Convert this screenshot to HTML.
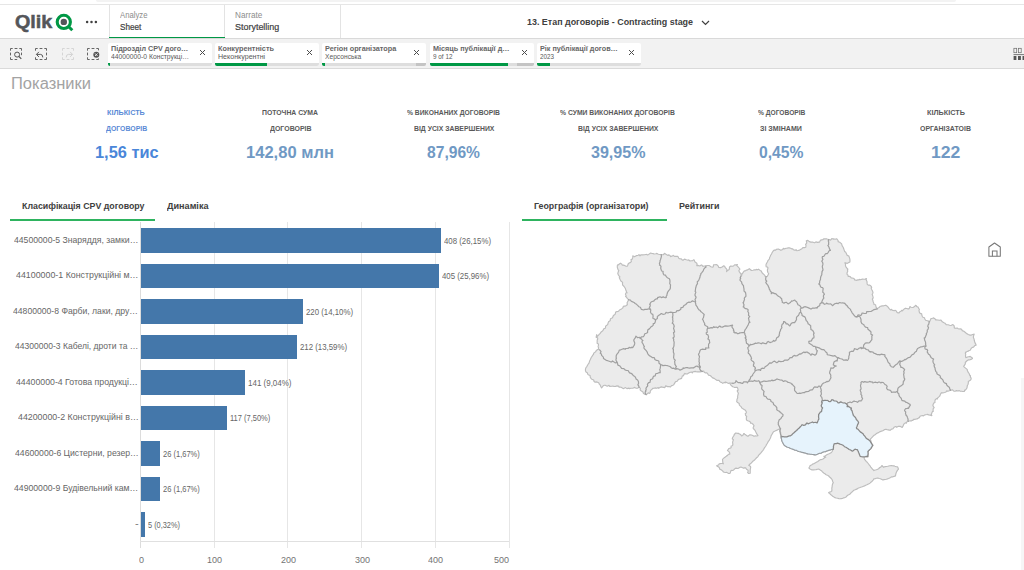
<!DOCTYPE html>
<html lang="uk">
<head>
<meta charset="utf-8">
<title>13. Етап договорів - Contracting stage</title>
<style>
*{box-sizing:border-box;margin:0;padding:0}
html,body{width:1024px;height:570px;overflow:hidden;background:#fff}
body{position:relative;font-family:"Liberation Sans","DejaVu Sans",sans-serif;color:#404040}
.abs{position:absolute}
.t{position:absolute;white-space:nowrap;line-height:1;transform-origin:0 50%}
#topline{left:0;top:4px;width:1024px;height:1px;background:#e6e6e6}
#topbar{left:96px;top:0;width:860px;height:2px;background:#f3f3f3;border-radius:0 0 3px 3px}
#hdr{left:0;top:5px;width:1024px;height:34px;background:#fff;border-bottom:1px solid #d9d9d9}
.vline{position:absolute;top:5px;width:1px;height:33px;background:#e3e3e3}
#tabul{left:109px;top:36.8px;width:115.5px;height:1.7px;background:#009845}
#selbar{left:0;top:39px;width:1024px;height:30px;background:#f2f2f2;border-bottom:1px solid #dadada}
.chip{position:absolute;top:43px;width:104px;height:23px;background:#fff;border-radius:2px;overflow:hidden}
.c1{font-size:8.1px;font-weight:bold;color:#666}
.c2{font-size:6.5px;color:#595959}
.chip .bar{position:absolute;left:0;bottom:0;height:3px;width:104px;background:#dedede}
.chip .bar i{position:absolute;left:0;top:0;height:100%;background:#009845;display:block}
.chip .bar b{position:absolute;right:0;top:0;height:100%;background:#c4c4c4;display:block}
.chip svg{position:absolute;left:90px;top:5.3px}
.klabel{font-weight:bold;font-size:7.5px;color:#767676}
.kval{font-weight:bold;font-size:16.5px;color:#7099c4}
.ptab{font-weight:bold;font-size:9.5px;color:#404040}
.ylab{font-size:9.2px;color:#666}
.vlab{font-size:8.7px;color:#666}
.xlab{font-size:8.7px;color:#737373}
.grid{position:absolute;top:222px;width:1px;height:326px;background:#e6e6e6}
.bar{position:absolute;left:141px;height:24.2px;background:#4477aa}
</style>
</head>
<body>
<div class="abs" id="topline"></div><div class="abs" id="topbar"></div>
<div class="abs" id="hdr"></div>
<div class="t " id="logo" style="left:14.90px;top:13.40px;transform:scaleX(1.0729);font-size:18.4px;font-weight:bold;color:#54565a;-webkit-text-stroke:0.5px #54565a">Qlik</div>
<svg class="abs" style="left:53px;top:11px" width="24" height="22" viewBox="0 0 24 22"><circle cx="10.8" cy="10.9" r="6.6" fill="none" stroke="#009845" stroke-width="3.1"/><circle cx="10.8" cy="10.9" r="3.2" fill="#54565a"/><path d="M15.2 15.3 L19.3 19.3" stroke="#009845" stroke-width="3" stroke-linecap="butt"/></svg>
<svg class="abs" style="left:85px;top:20px" width="14" height="4" viewBox="0 0 14 4"><circle cx="2.1" cy="2" r="1.25" fill="#404040"/><circle cx="6.5" cy="2" r="1.25" fill="#404040"/><circle cx="10.9" cy="2" r="1.25" fill="#404040"/></svg>
<div class="vline" style="left:109px"></div>
<div class="vline" style="left:224px"></div>
<div class="vline" style="left:340px"></div>
<div class="abs" id="tabul"></div>
<div class="t " id="nav1a" style="left:119.70px;top:11.20px;transform:scaleX(0.9312);font-size:8.3px;color:#8c8c8c">Analyze</div>
<div class="t " id="nav1b" style="left:119.70px;top:23.00px;transform:scaleX(0.9261);font-size:8.8px;color:#404040;-webkit-text-stroke:0.2px #404040">Sheet</div>
<div class="t " id="nav2a" style="left:234.70px;top:11.20px;transform:scaleX(0.9866);font-size:8.3px;color:#8c8c8c">Narrate</div>
<div class="t " id="nav2b" style="left:234.70px;top:23.00px;transform:scaleX(1.0177);font-size:8.8px;color:#404040;-webkit-text-stroke:0.2px #404040">Storytelling</div>
<div class="t " id="title" style="left:527.30px;top:17.90px;transform:scaleX(0.9585);font-size:9.3px;font-weight:bold;color:#404040">13. Етап договорів - Contracting stage</div>
<svg class="abs" style="left:701px;top:19.7px" width="9" height="6" viewBox="0 0 9 6"><path d="M1 1 L4.5 4.5 L8 1" fill="none" stroke="#404040" stroke-width="1.2"/></svg>
<div class="abs" id="selbar"></div>
<svg class="abs" style="left:8.5px;top:47px;opacity:1" width="14" height="14" viewBox="0 0 14 14"><rect x="1.5" y="1.5" width="11" height="11" fill="none" stroke="#555555" stroke-width="0.9" stroke-dasharray="4.4 1.9 2.8 1.9" stroke-dashoffset="2.2"/><rect x="8.5" y="8.5" width="6" height="6" fill="#f2f2f2"/><circle cx="8.1" cy="7.6" r="2.5" fill="#f2f2f2" stroke="#555555" stroke-width="1"/><path d="M10 9.5 L12.3 11.8" stroke="#555555" stroke-width="1.2"/></svg>
<svg class="abs" style="left:34.1px;top:47px;opacity:1" width="14" height="14" viewBox="0 0 14 14"><rect x="1.5" y="1.5" width="11" height="11" fill="none" stroke="#555555" stroke-width="0.9" stroke-dasharray="4.4 1.9 2.8 1.9" stroke-dashoffset="2.2"/><rect x="0" y="5" width="3" height="5" fill="#f2f2f2"/><path d="M2.6 7.4 H6.6 Q8.8 7.4 8.8 10.4" fill="none" stroke="#555555" stroke-width="1"/><path d="M4.9 4.9 L2.4 7.4 L4.9 9.9" fill="none" stroke="#555555" stroke-width="1"/></svg>
<svg class="abs" style="left:60.599999999999994px;top:47px;opacity:0.2" width="14" height="14" viewBox="0 0 14 14"><rect x="1.5" y="1.5" width="11" height="11" fill="none" stroke="#555555" stroke-width="0.9" stroke-dasharray="4.4 1.9 2.8 1.9" stroke-dashoffset="2.2"/><rect x="11" y="5" width="3" height="5" fill="#f2f2f2"/><path d="M11.4 7.4 H7.4 Q5.2 7.4 5.2 10.4" fill="none" stroke="#555555" stroke-width="1"/><path d="M9.1 4.9 L11.6 7.4 L9.1 9.9" fill="none" stroke="#555555" stroke-width="1"/></svg>
<svg class="abs" style="left:85.9px;top:47px;opacity:1" width="14" height="14" viewBox="0 0 14 14"><rect x="1.5" y="1.5" width="11" height="11" fill="none" stroke="#555555" stroke-width="0.9" stroke-dasharray="4.4 1.9 2.8 1.9" stroke-dashoffset="2.2"/><rect x="9" y="3.5" width="5" height="8" fill="#f2f2f2"/><circle cx="10.3" cy="7.7" r="3" fill="#555555"/><path d="M9 6.4 L11.6 9 M11.6 6.4 L9 9" stroke="#f2f2f2" stroke-width="0.9"/></svg>
<div class="chip" style="left:108px"><svg width="9" height="9" viewBox="0 0 9 9"><path d="M2 2 L7 7 M7 2 L2 7" stroke="#4d4d4d" stroke-width="1"/></svg><div class="bar"><i style="width:2px"></i></div></div>
<div class="t c1" id="ch0a" style="left:111.00px;top:44.80px;transform:scaleX(0.8879);">Підрозділ CPV дого…</div>
<div class="t c2" id="ch0b" style="left:111.00px;top:54.10px;transform:scaleX(1.0396);">44000000-0 Конструкці…</div>
<div class="chip" style="left:215px"><svg width="9" height="9" viewBox="0 0 9 9"><path d="M2 2 L7 7 M7 2 L2 7" stroke="#4d4d4d" stroke-width="1"/></svg><div class="bar"><i style="width:52px"></i></div></div>
<div class="t c1" id="ch1a" style="left:218.00px;top:44.80px;transform:scaleX(0.9016);">Конкурентність</div>
<div class="t c2" id="ch1b" style="left:218.00px;top:54.10px;transform:scaleX(1.0886);">Неконкурентні</div>
<div class="chip" style="left:322px"><svg width="9" height="9" viewBox="0 0 9 9"><path d="M2 2 L7 7 M7 2 L2 7" stroke="#4d4d4d" stroke-width="1"/></svg><div class="bar"><i style="width:3px"></i><b style="width:10px"></b></div></div>
<div class="t c1" id="ch2a" style="left:325.00px;top:44.80px;transform:scaleX(0.9016);">Регіон організатора</div>
<div class="t c2" id="ch2b" style="left:325.00px;top:54.10px;transform:scaleX(1.0242);">Херсонська</div>
<div class="chip" style="left:429.5px"><svg width="9" height="9" viewBox="0 0 9 9"><path d="M2 2 L7 7 M7 2 L2 7" stroke="#4d4d4d" stroke-width="1"/></svg><div class="bar"><i style="width:78.5px"></i><b style="width:17px"></b></div></div>
<div class="t c1" id="ch3a" style="left:432.50px;top:44.80px;transform:scaleX(0.8944);">Місяць публікації д…</div>
<div class="t c2" id="ch3b" style="left:432.50px;top:54.10px;transform:scaleX(0.9804);">9 of 12</div>
<div class="chip" style="left:537px"><svg width="9" height="9" viewBox="0 0 9 9"><path d="M2 2 L7 7 M7 2 L2 7" stroke="#4d4d4d" stroke-width="1"/></svg><div class="bar"><i style="width:13px"></i></div></div>
<div class="t c1" id="ch4a" style="left:540.00px;top:44.80px;transform:scaleX(0.8923);">Рік публікації догов…</div>
<div class="t c2" id="ch4b" style="left:540.00px;top:54.10px;transform:scaleX(0.9676);">2023</div>
<svg class="abs" style="left:1013px;top:47px" width="11" height="14" viewBox="0 0 11 14"><rect x="0.9" y="1.3" width="2.8" height="4.4" fill="none" stroke="#6a6a6a" stroke-width="0.7"/><rect x="5.4" y="1.3" width="2.8" height="4.4" fill="none" stroke="#6a6a6a" stroke-width="0.7"/><rect x="0.5" y="7.3" width="10.5" height="0.8" fill="#555"/><rect x="0.6" y="9" width="2.8" height="4" fill="#555"/><rect x="5" y="9" width="2.9" height="4" fill="#555"/><rect x="9.5" y="9" width="1.5" height="4" fill="#555"/></svg>
<div class="t " id="sheet" style="left:11.20px;top:75.90px;transform:scaleX(1.0320);font-size:16px;color:#a3a3a3">Показники</div>
<div class="t klabel" id="k0a" style="left:107.40px;top:109.00px;transform:scaleX(0.9646);color:#5a8ad6">КІЛЬКІСТЬ</div>
<div class="t klabel" id="k0b" style="left:105.90px;top:124.50px;transform:scaleX(0.9210);color:#5a8ad6">ДОГОВОРІВ</div>
<div class="t kval" id="k0v" style="left:94.80px;top:143.70px;transform:scaleX(0.9921);color:#4a86d9">1,56 тис</div>
<div class="t klabel" id="k1a" style="left:262.30px;top:109.00px;transform:scaleX(0.9136);color:#595959">ПОТОЧНА СУМА</div>
<div class="t klabel" id="k1b" style="left:269.50px;top:124.50px;transform:scaleX(0.9277);color:#595959">ДОГОВОРІВ</div>
<div class="t kval" id="k1v" style="left:246.30px;top:143.70px;transform:scaleX(1.0021);color:#7099c4">142,80 млн</div>
<div class="t klabel" id="k2a" style="left:407.30px;top:109.00px;transform:scaleX(0.8981);color:#595959">% ВИКОНАНИХ ДОГОВОРІВ</div>
<div class="t klabel" id="k2b" style="left:413.80px;top:124.50px;transform:scaleX(0.9128);color:#595959">ВІД УСІХ ЗАВЕРШЕНИХ</div>
<div class="t kval" id="k2v" style="left:427.30px;top:143.70px;transform:scaleX(0.9470);color:#7099c4">87,96%</div>
<div class="t klabel" id="k3a" style="left:560.30px;top:109.00px;transform:scaleX(0.9037);color:#595959">% СУМИ ВИКОНАНИХ ДОГОВОРІВ</div>
<div class="t klabel" id="k3b" style="left:577.80px;top:124.50px;transform:scaleX(0.9128);color:#595959">ВІД УСІХ ЗАВЕРШЕНИХ</div>
<div class="t kval" id="k3v" style="left:590.80px;top:143.70px;transform:scaleX(0.9738);color:#7099c4">39,95%</div>
<div class="t klabel" id="k4a" style="left:758.30px;top:109.00px;transform:scaleX(0.8862);color:#595959">% ДОГОВОРІВ</div>
<div class="t klabel" id="k4b" style="left:760.30px;top:124.50px;transform:scaleX(0.9442);color:#595959">ЗІ ЗМІНАМИ</div>
<div class="t kval" id="k4v" style="left:759.30px;top:143.70px;transform:scaleX(0.9509);color:#7099c4">0,45%</div>
<div class="t klabel" id="k5a" style="left:926.80px;top:109.00px;transform:scaleX(0.9671);color:#595959">КІЛЬКІСТЬ</div>
<div class="t klabel" id="k5b" style="left:920.30px;top:124.50px;transform:scaleX(0.9252);color:#595959">ОРГАНІЗАТОІВ</div>
<div class="t kval" id="k5v" style="left:930.80px;top:143.70px;transform:scaleX(1.0679);color:#7099c4">122</div>
<div class="t ptab" id="pt1" style="left:21.80px;top:200.90px;transform:scaleX(0.9279);">Класифікація CPV договору</div>
<div class="t ptab" id="pt2" style="left:166.80px;top:200.90px;transform:scaleX(0.9575);">Динаміка</div>
<div class="abs" style="left:10px;top:219.4px;width:144.7px;height:1.6px;background:#2eb35f"></div>
<div class="t ptab" id="pt3" style="left:534.30px;top:200.90px;transform:scaleX(0.9281);">Георграфія (організатори)</div>
<div class="t ptab" id="pt4" style="left:679.30px;top:200.90px;transform:scaleX(0.9361);">Рейтинги</div>
<div class="abs" style="left:522px;top:219.4px;width:145px;height:1.6px;background:#2eb35f"></div>
<div class="grid" style="left:139.9px;background:#dcdcdc"></div>
<div class="grid" style="left:213.7px"></div>
<div class="grid" style="left:287.4px"></div>
<div class="grid" style="left:361.1px"></div>
<div class="grid" style="left:434.9px"></div>
<div class="grid" style="left:508.6px"></div>
<div class="abs" style="left:140px;top:541.3px;width:369px;height:1.2px;background:#e0e0e0"></div>
<div class="bar" style="top:228.4px;width:300.3px"></div>
<div class="t ylab" id="yl0" style="left:13.90px;top:235.70px;transform:scaleX(0.9410);">44500000-5 Знаряддя, замки…</div>
<div class="t vlab" id="vl0" style="left:444.49px;top:236.50px;transform:scaleX(0.9009);">408 (26,15%)</div>
<div class="bar" style="top:263.9px;width:298.1px"></div>
<div class="t ylab" id="yl1" style="left:15.80px;top:271.20px;transform:scaleX(0.9625);">44100000-1 Конструкційні м…</div>
<div class="t vlab" id="vl1" style="left:442.28px;top:272.00px;transform:scaleX(0.9009);">405 (25,96%)</div>
<div class="bar" style="top:299.4px;width:161.9px"></div>
<div class="t ylab" id="yl2" style="left:13.30px;top:306.70px;transform:scaleX(0.9378);">44800000-8 Фарби, лаки, дру…</div>
<div class="t vlab" id="vl2" style="left:306.12px;top:307.50px;transform:scaleX(0.9009);">220 (14,10%)</div>
<div class="bar" style="top:334.9px;width:156.0px"></div>
<div class="t ylab" id="yl3" style="left:14.80px;top:342.20px;transform:scaleX(0.9295);">44300000-3 Кабелі, дроти та …</div>
<div class="t vlab" id="vl3" style="left:300.23px;top:343.00px;transform:scaleX(0.9009);">212 (13,59%)</div>
<div class="bar" style="top:370.4px;width:103.8px"></div>
<div class="t ylab" id="yl4" style="left:16.40px;top:377.70px;transform:scaleX(0.9517);">44400000-4 Готова продукці…</div>
<div class="t vlab" id="vl4" style="left:247.98px;top:378.50px;transform:scaleX(0.9191);">141 (9,04%)</div>
<div class="bar" style="top:405.9px;width:86.1px"></div>
<div class="t ylab" id="yl5" style="left:17.50px;top:413.20px;transform:scaleX(0.9600);">44200000-2 Конструкційні в…</div>
<div class="t vlab" id="vl5" style="left:230.31px;top:414.00px;transform:scaleX(0.8610);">117 (7,50%)</div>
<div class="bar" style="top:441.4px;width:19.1px"></div>
<div class="t ylab" id="yl6" style="left:14.50px;top:448.70px;transform:scaleX(0.9421);">44600000-6 Цистерни, резер…</div>
<div class="t vlab" id="vl6" style="left:163.34px;top:449.50px;transform:scaleX(0.8659);">26 (1,67%)</div>
<div class="bar" style="top:476.9px;width:19.1px"></div>
<div class="t ylab" id="yl7" style="left:14.00px;top:484.20px;transform:scaleX(0.9439);">44900000-9 Будівельний кам…</div>
<div class="t vlab" id="vl7" style="left:163.34px;top:485.00px;transform:scaleX(0.8659);">26 (1,67%)</div>
<div class="bar" style="top:512.4px;width:3.7px"></div>
<div class="t ylab" id="yl8" style="left:134.50px;top:519.70px;transform:scaleX(1.2082);">-</div>
<div class="t vlab" id="vl8" style="left:147.88px;top:520.50px;transform:scaleX(0.8494);">5 (0,32%)</div>
<div class="t xlab" id="xl0" style="left:138.50px;top:555.50px;transform:scaleX(1.0323);">0</div>
<div class="t xlab" id="xl1" style="left:207.20px;top:555.50px;transform:scaleX(1.0345);">100</div>
<div class="t xlab" id="xl2" style="left:280.90px;top:555.50px;transform:scaleX(1.0345);">200</div>
<div class="t xlab" id="xl3" style="left:354.70px;top:555.50px;transform:scaleX(1.0345);">300</div>
<div class="t xlab" id="xl4" style="left:428.40px;top:555.50px;transform:scaleX(1.0345);">400</div>
<div class="t xlab" id="xl5" style="left:494.00px;top:555.50px;transform:scaleX(1.0345);">500</div>
<svg class="abs" style="left:987px;top:242px" width="15" height="16" viewBox="0 0 15 16"><path d="M1.9 5 L7.5 1 L13.3 5 V14.3 H1.9 Z" fill="none" stroke="#777" stroke-width="1.05" stroke-linejoin="round"/><path d="M5.4 14.3 V9 H10 V14.3" fill="none" stroke="#777" stroke-width="1.05"/></svg>
<div class="abs" style="left:1021px;top:378px;width:3px;height:192px;background:#f6f6f6"></div>
<svg class="abs" style="left:0;top:0" width="1024" height="570" viewBox="0 0 1024 570">
<path d="M617.5 264.9L617.7 265.3L618.4 264.7L620.4 263.2L621.7 263.9L622.2 265.1L623.2 265.1L624.4 265.4L625.7 266.1L627.2 266.3L627.8 265.2L628.1 264.0L629.2 263.0L630.6 262.4L631.4 261.3L631.0 259.6L632.2 259.1L632.8 257.6L632.8 255.9L633.8 256.2L634.6 256.7L636.6 255.6L638.2 255.2L639.0 254.6L640.0 255.8L640.8 254.9L642.5 254.9L644.5 254.8L645.8 254.5L646.6 254.4L647.4 255.0L648.7 254.4L650.6 253.0L652.1 253.5L653.4 253.6L653.9 254.0L655.9 253.8L656.9 253.4L658.0 254.1L658.5 254.2L660.4 254.5L662.0 254.8L663.2 254.7L664.8 253.3L665.5 254.1L668.0 255.4L668.4 254.9L669.8 255.3L670.5 256.6L672.9 255.8L673.0 255.3L674.5 256.4L675.3 256.3L677.7 256.4L678.3 257.1L678.7 258.1L679.5 258.8L681.3 258.9L682.3 260.0L683.0 260.3L684.5 259.1L686.3 259.8L688.0 260.2L688.8 259.9L689.9 261.0L691.4 260.7L692.7 260.6L693.5 259.8L694.3 260.1L694.8 261.8L696.5 262.9L697.1 264.0L696.8 265.7L697.9 265.4L699.8 266.0L701.3 264.9L702.1 265.3L702.9 266.4L704.2 266.0L705.8 266.0L707.0 265.5L708.7 265.5L709.4 265.6L710.9 266.7L712.6 267.2L713.3 266.8L713.5 264.9L714.7 264.7L716.7 264.6L717.7 265.5L718.2 266.1L718.8 267.5L720.6 267.6L722.1 267.0L723.8 265.8L724.8 266.4L725.1 267.4L725.9 268.3L726.3 268.6L726.9 269.5L726.6 271.6L727.5 270.5L728.9 269.7L729.3 269.1L729.5 267.0L730.8 266.0L732.8 266.2L733.8 265.7L734.6 264.9L736.2 264.8L737.4 264.5L736.6 265.4L738.1 266.8L739.1 268.0L739.9 269.1L738.9 270.5L739.2 271.7L740.1 272.8L740.8 273.7L741.4 275.2L740.9 276.2L741.9 274.8L742.0 273.8L742.7 273.2L743.5 271.9L744.4 270.8L745.0 271.1L745.9 270.4L747.6 269.9L749.3 268.7L750.9 270.0L751.4 270.5L753.1 270.3L754.3 269.8L755.4 270.0L756.2 269.4L757.3 269.8L758.5 269.2L760.4 270.6L760.8 270.9L761.3 271.1L761.9 272.5L763.1 273.8L763.8 274.4L764.8 275.4L764.8 276.0L766.0 276.6L767.2 276.5L767.6 275.7L768.7 273.7L768.7 273.8L767.9 272.5L767.5 271.3L767.4 270.0L768.0 267.8L767.5 267.1L766.2 266.8L766.0 265.3L766.1 264.3L767.2 262.3L767.5 261.8L767.9 260.6L769.3 259.2L769.6 258.1L769.6 257.5L770.3 256.3L770.8 254.9L771.4 254.4L772.1 252.6L773.2 251.0L773.8 250.4L774.5 250.1L775.7 250.1L776.3 249.4L778.4 249.0L779.9 249.7L780.8 250.3L781.6 249.9L782.8 249.5L783.3 248.3L784.3 248.9L786.2 248.2L787.5 248.1L788.1 247.8L789.3 247.9L790.7 248.2L792.0 248.9L792.7 248.8L793.4 249.7L794.8 250.1L796.4 249.9L796.9 250.7L798.0 250.5L799.6 250.1L800.9 249.3L801.9 248.7L803.1 247.5L804.6 247.6L805.8 247.3L806.0 245.2L805.5 244.5L806.4 243.3L806.8 242.8L806.3 240.8L807.8 240.4L808.6 241.0L809.4 241.6L810.8 242.1L812.6 242.0L813.6 242.5L814.5 242.8L815.9 241.9L817.6 242.4L819.0 242.1L819.6 242.1L820.3 240.4L821.5 239.9L822.8 239.8L823.9 238.8L824.9 238.9L826.8 238.8L827.0 239.0L828.8 239.5L830.5 240.2L832.0 238.5L833.5 239.2L833.6 238.8L835.0 239.3L836.8 238.8L838.1 240.5L838.1 241.6L839.7 242.2L841.1 243.4L841.7 244.0L841.8 244.6L842.2 245.9L843.3 247.5L843.7 248.8L844.2 250.1L844.6 251.4L845.8 252.2L846.1 253.0L846.7 254.3L847.1 255.3L848.9 256.1L849.4 257.6L849.9 259.1L849.9 259.9L850.0 260.8L849.9 261.9L847.8 263.1L846.7 263.4L846.0 262.9L844.8 262.8L845.5 264.1L845.5 266.0L846.3 267.5L847.1 268.3L847.9 269.2L847.4 269.8L847.8 271.1L847.0 272.9L847.1 274.4L847.9 275.0L848.2 276.4L849.1 276.4L850.2 276.6L851.2 277.9L853.3 278.2L854.0 278.5L854.7 279.9L857.0 280.4L857.7 279.8L859.0 279.8L859.5 279.4L860.2 279.7L862.6 279.1L864.0 279.2L865.1 279.1L866.5 278.6L866.1 279.8L867.0 281.5L867.1 283.4L867.3 284.4L868.2 285.1L869.4 285.1L870.7 285.8L871.4 286.7L871.7 287.5L871.1 287.9L871.5 289.2L872.4 290.8L873.0 292.4L872.7 293.5L872.1 294.5L872.5 295.1L873.0 296.9L873.2 297.8L872.3 299.1L872.8 300.2L873.1 301.5L873.8 303.4L874.1 304.5L875.6 304.7L875.7 305.6L876.2 307.3L877.3 308.8L878.3 307.8L879.1 307.5L880.4 306.2L881.3 306.1L881.9 305.9L883.4 305.9L883.8 305.8L885.8 305.2L886.9 305.9L887.1 306.1L887.9 306.9L889.2 308.7L890.4 309.9L891.5 309.3L892.1 310.1L894.3 310.7L895.1 310.3L896.3 311.0L897.1 312.6L899.0 312.9L899.8 311.8L900.9 311.3L901.6 310.4L902.5 310.8L903.4 309.6L904.1 309.1L905.6 308.2L907.7 308.8L908.8 308.8L909.4 308.1L909.9 306.6L911.0 307.3L913.0 307.5L914.6 306.5L915.5 305.3L916.4 305.7L916.5 306.4L918.0 307.1L918.6 308.3L919.4 309.3L919.0 310.6L919.4 312.3L920.2 313.4L921.7 313.9L921.8 314.8L922.2 316.2L922.9 317.3L924.5 317.7L924.7 318.8L925.6 320.2L927.4 320.7L928.7 321.1L929.5 321.9L929.4 321.2L930.0 320.9L931.0 318.6L932.5 318.3L933.7 317.9L935.2 318.9L935.7 320.0L936.3 319.9L937.9 320.0L939.2 320.3L941.0 320.0L941.2 320.4L942.3 321.8L944.0 322.7L944.7 323.0L945.6 323.9L946.2 324.7L947.9 324.7L949.1 325.0L949.4 325.2L951.0 325.5L952.9 324.6L953.9 325.5L954.2 326.3L954.3 327.9L955.2 328.3L957.2 328.1L958.3 328.7L959.0 329.0L960.2 328.8L961.7 329.4L962.3 330.8L962.8 330.9L963.9 331.3L965.7 332.7L966.5 333.7L967.2 333.7L968.2 334.5L970.0 335.1L971.4 335.1L972.6 334.5L974.2 334.1L973.5 336.0L973.4 337.5L973.8 338.4L974.1 339.2L974.2 339.9L974.3 340.5L974.8 342.4L975.9 344.4L976.1 345.1L974.5 345.7L974.0 346.7L973.5 347.2L972.4 347.4L971.3 348.2L970.2 350.2L969.1 350.5L968.2 351.2L967.3 351.4L966.0 352.3L965.8 352.1L965.3 353.0L965.6 353.8L965.7 354.2L965.5 355.9L965.8 357.7L968.1 356.8L968.9 356.7L970.2 356.4L971.4 357.4L972.0 357.5L972.5 358.5L971.0 359.4L969.2 360.0L968.4 359.9L967.7 360.2L966.7 361.0L965.3 362.5L965.4 363.3L964.9 364.7L963.7 366.4L964.3 367.1L965.6 368.1L967.1 369.4L967.3 369.7L967.3 370.4L967.7 371.2L968.1 372.2L969.4 374.0L969.5 375.1L970.4 375.5L970.4 377.2L971.2 378.1L970.9 379.6L969.9 380.6L968.3 381.4L968.4 382.2L968.1 384.2L967.5 385.2L967.3 385.7L967.0 387.9L966.4 388.8L965.3 390.1L964.6 390.1L964.4 391.4L962.8 391.5L961.6 391.2L960.3 391.3L959.0 390.6L958.4 391.0L956.5 390.6L955.1 391.2L953.9 391.2L953.3 390.6L952.4 389.8L950.7 390.3L949.3 390.7L947.9 391.3L946.8 390.9L946.0 392.0L944.6 392.5L942.8 392.9L941.5 392.7L940.5 394.1L940.0 395.6L939.5 396.4L938.3 397.4L937.6 398.0L937.5 398.9L936.8 398.5L935.2 399.8L934.9 401.2L935.0 402.5L933.9 402.9L933.2 404.2L932.9 405.5L933.6 406.9L934.2 407.6L933.2 408.6L933.1 410.0L933.2 411.4L932.5 411.4L931.9 412.8L931.3 414.5L931.8 415.6L930.2 415.1L928.7 414.9L927.2 414.4L926.8 414.5L924.8 414.9L923.5 415.9L922.8 415.6L921.4 415.8L920.0 416.3L919.4 417.7L918.8 417.7L917.8 418.6L916.8 418.9L915.2 419.3L913.5 419.3L912.9 420.5L912.0 420.4L911.1 421.1L910.5 420.8L908.3 421.3L906.7 422.0L906.3 423.2L905.5 422.8L904.5 423.6L903.7 424.3L903.1 426.2L902.7 426.3L902.2 427.5L900.0 426.3L898.5 426.3L896.6 427.3L896.2 426.7L895.7 426.5L894.0 427.3L892.8 429.0L891.8 429.0L891.0 429.6L890.2 430.3L889.2 430.1L888.3 429.9L887.1 429.7L886.0 429.2L884.6 429.6L883.3 430.4L882.2 430.9L881.3 431.2L880.2 431.6L879.0 432.3L877.9 432.9L876.9 433.3L876.0 433.9L875.1 434.7L874.1 435.3L873.2 436.1L872.3 437.1L871.3 438.2L870.3 439.2L870.8 440.5L871.1 442.1L871.5 443.1L872.1 444.2L872.7 445.1L873.1 445.3L872.5 446.3L871.7 447.3L870.9 448.6L870.0 449.4L869.0 450.3L867.9 451.5L868.0 452.5L868.1 453.8L867.9 455.1L867.8 456.6L866.6 456.4L865.4 456.7L864.2 456.9L864.2 458.6L864.6 459.4L865.4 460.3L866.2 461.4L867.2 462.3L867.8 463.0L868.6 464.0L869.4 465.2L870.3 466.2L870.8 467.1L871.5 467.9L872.3 469.0L873.3 469.9L873.9 470.6L875.1 470.0L876.4 469.7L877.7 469.2L878.8 468.5L879.8 467.5L880.8 467.1L881.9 465.5L882.8 466.5L883.7 467.3L885.1 466.6L886.3 466.5L887.7 466.3L888.8 466.0L889.8 465.8L891.4 465.6L892.7 465.8L894.0 465.8L894.9 466.2L896.3 466.7L897.5 466.7L898.1 468.0L898.5 469.2L897.6 470.1L897.1 470.9L896.5 472.1L896.0 473.3L895.7 474.5L895.5 475.9L894.1 476.4L892.9 476.8L891.7 476.8L890.6 477.5L889.7 478.0L888.6 478.5L887.4 478.9L886.4 479.2L885.1 479.5L884.0 479.6L882.9 480.0L881.4 479.2L880.4 478.7L879.2 478.5L877.8 478.0L876.3 478.2L875.2 478.7L873.9 478.9L873.2 480.0L872.6 480.8L871.7 481.6L870.9 482.3L870.0 483.1L869.0 483.8L867.9 484.3L866.9 484.8L865.7 485.3L864.5 485.9L863.5 486.2L862.3 486.8L860.7 487.3L859.4 487.8L858.4 488.0L857.3 488.9L856.1 489.4L855.1 489.8L854.4 490.0L853.4 490.6L852.3 491.8L851.2 492.6L850.4 493.7L849.3 494.4L848.1 495.1L847.2 495.7L846.4 496.7L845.5 497.3L844.6 497.7L843.4 497.9L842.3 498.5L841.2 498.6L839.9 498.8L838.9 498.6L837.7 498.3L836.2 498.0L834.8 497.6L833.9 496.9L832.7 496.2L831.7 495.4L830.6 494.5L829.8 493.6L828.6 492.7L829.6 492.1L830.7 491.7L831.8 491.1L831.9 489.6L831.8 488.1L832.1 487.0L832.2 485.6L832.4 484.6L832.7 483.6L833.3 482.6L832.7 481.5L832.3 480.0L831.5 478.7L830.5 477.8L829.6 477.0L828.7 476.0L827.6 475.3L826.7 475.0L825.7 474.5L824.9 473.7L823.7 473.0L822.9 472.3L822.0 471.3L821.0 470.4L819.8 469.7L818.7 469.1L817.5 469.2L816.1 469.6L814.5 469.8L813.1 469.8L811.9 469.9L811.1 469.5L809.9 468.9L808.9 468.0L809.6 466.7L810.0 465.7L810.9 465.2L811.9 464.7L812.9 463.9L814.1 463.6L815.1 463.0L815.9 462.5L816.9 461.9L817.9 461.5L818.7 460.7L819.8 460.1L820.8 459.6L821.8 459.5L823.0 459.0L823.9 458.3L824.8 457.5L825.8 457.3L824.8 456.9L823.8 456.3L824.9 456.0L825.8 455.4L826.8 454.8L827.8 454.2L828.5 454.0L829.6 453.5L830.6 453.0L831.6 452.2L832.2 451.5L832.5 450.4L833.1 449.3L831.3 449.5L830.4 450.0L829.4 450.1L828.1 450.6L826.6 451.0L825.5 451.7L824.2 451.7L823.1 452.1L822.2 452.6L821.0 453.3L819.5 453.3L818.3 453.7L817.3 454.2L816.2 454.7L815.0 454.9L813.9 454.6L812.5 454.5L811.3 454.3L810.4 454.3L809.1 454.0L808.1 453.9L806.6 453.6L805.8 453.1L804.6 452.9L803.5 452.6L802.1 452.4L801.0 451.9L800.0 451.7L798.8 451.5L797.4 450.9L796.4 450.3L795.1 450.2L794.1 449.7L792.6 449.1L791.6 448.8L790.5 448.4L789.3 447.7L787.9 447.3L786.9 446.9L785.7 446.2L784.5 445.5L783.8 444.7L783.3 443.7L782.7 442.5L782.1 441.4L781.7 440.3L781.6 439.2L781.2 438.1L781.0 436.8L780.9 435.3L780.7 434.1L780.7 432.7L780.2 431.4L780.3 430.1L780.7 428.6L778.8 429.3L777.6 429.8L776.7 430.4L775.6 430.6L774.6 431.3L773.5 431.8L772.8 432.9L772.4 433.6L771.7 434.7L771.0 436.1L770.8 437.1L770.3 438.3L769.5 439.7L769.0 440.7L768.4 441.3L767.8 442.4L767.2 443.6L766.5 444.5L766.1 445.5L765.5 446.5L764.6 447.7L764.1 448.4L763.6 449.5L762.8 450.6L761.9 451.6L761.3 452.4L760.5 453.4L759.4 454.5L758.7 455.1L758.1 456.3L757.2 457.3L756.3 458.0L755.6 458.8L754.8 459.7L753.9 460.5L753.1 461.0L752.1 462.1L751.1 463.2L750.0 464.0L748.7 465.3L750.3 466.2L750.7 467.1L750.5 468.4L750.3 469.4L750.2 470.6L750.2 472.0L750.2 473.2L748.6 473.5L747.6 472.4L747.8 472.4L748.1 471.3L748.1 470.2L746.5 469.2L745.7 467.9L744.1 467.9L743.9 468.3L741.9 467.4L741.0 467.0L739.8 467.4L738.7 468.1L737.7 468.5L736.0 468.1L734.5 469.0L733.7 469.9L732.5 470.5L731.1 470.4L730.7 471.5L730.0 473.4L728.5 473.5L726.9 472.4L725.1 472.5L724.3 472.3L723.3 471.9L722.6 470.9L721.1 469.8L720.9 469.6L719.7 469.1L719.3 467.6L717.8 466.6L717.6 466.5L716.7 465.7L717.6 465.2L718.5 465.0L719.2 463.9L720.8 463.5L722.4 463.5L723.4 463.8L722.8 462.6L722.6 460.1L722.5 459.3L723.0 458.9L724.3 457.7L726.0 456.6L726.6 455.9L727.3 455.6L728.6 454.2L729.7 454.2L729.7 453.1L728.9 451.6L727.5 450.6L728.8 448.5L730.3 448.1L731.1 447.7L731.1 446.0L732.2 445.8L732.8 444.9L732.8 444.0L732.6 442.1L733.2 440.4L733.4 439.8L732.3 438.9L732.5 437.8L733.8 435.7L734.1 435.4L734.2 434.5L735.8 433.0L737.4 433.3L738.7 433.3L738.9 433.7L740.7 434.6L741.6 435.9L742.7 435.5L743.5 434.0L744.0 433.5L744.8 434.2L746.3 435.3L747.2 435.9L747.9 436.4L748.2 435.9L749.9 434.8L751.5 435.0L752.8 435.5L754.0 436.2L755.3 435.9L756.8 436.0L758.0 435.7L757.3 434.6L756.6 433.7L756.2 432.7L755.7 431.8L755.3 430.8L754.4 429.5L753.4 428.7L753.1 427.9L754.0 425.7L752.7 423.9L751.8 423.3L750.6 423.2L750.6 422.2L748.8 421.0L747.7 420.7L746.5 420.1L746.4 419.6L746.4 418.9L746.3 417.9L746.7 416.5L745.6 415.4L745.3 413.6L745.9 413.4L746.4 412.2L745.9 411.0L745.4 410.3L743.3 409.0L742.6 408.6L741.8 408.1L741.1 406.7L739.9 405.6L739.3 404.9L739.2 403.4L737.2 402.2L736.6 401.2L736.9 400.7L737.0 399.3L737.8 397.8L737.5 396.8L737.7 396.2L738.0 394.5L738.4 393.3L737.6 391.7L737.2 391.0L738.1 390.0L737.8 388.5L737.2 387.3L736.3 387.3L734.3 387.5L733.9 387.0L732.7 386.7L731.9 386.0L730.4 384.6L730.2 382.8L728.8 383.5L727.6 382.9L725.6 381.9L725.4 382.8L724.2 382.4L722.8 383.4L721.4 382.4L720.7 382.3L719.9 381.6L719.0 380.3L717.8 380.4L716.6 380.3L715.8 379.4L714.9 378.9L714.2 378.4L712.6 377.9L711.9 377.2L710.8 376.0L710.1 375.5L708.4 375.1L707.8 373.9L706.9 372.9L705.6 372.9L704.2 372.2L703.7 371.0L702.5 371.2L702.2 371.4L700.0 371.9L698.5 371.7L697.6 371.9L696.0 371.7L695.3 371.4L693.1 371.7L692.3 372.9L691.9 372.1L690.3 372.2L688.7 373.1L687.3 374.0L685.7 373.9L684.9 373.4L684.4 373.9L683.4 375.6L682.2 376.1L682.1 376.7L681.6 378.4L680.1 378.9L679.0 379.2L678.5 379.4L677.2 381.2L675.7 381.6L675.1 382.4L674.4 383.6L673.7 384.8L672.9 385.2L671.8 385.6L671.2 386.0L670.5 387.0L669.3 386.6L667.6 386.6L665.7 385.9L664.7 387.7L663.9 387.3L662.8 387.3L661.5 386.9L660.1 387.4L658.8 388.3L658.2 387.6L656.4 388.3L655.2 387.9L654.2 388.2L652.7 388.4L652.1 389.2L651.2 389.9L650.3 391.0L650.2 392.5L649.6 393.3L648.2 392.9L647.0 394.1L646.2 394.6L644.6 394.1L643.4 393.4L643.0 392.0L641.4 391.0L640.8 390.5L640.1 389.8L640.4 388.4L639.1 387.3L637.5 388.2L636.3 388.3L634.8 387.8L634.8 387.3L632.9 388.2L631.8 388.2L630.9 388.2L629.4 388.6L629.0 388.1L626.9 388.6L625.5 387.6L624.2 388.2L623.6 388.6L622.7 388.2L621.2 387.3L619.9 387.1L619.1 387.2L618.5 386.1L616.6 385.9L615.5 386.4L614.2 386.5L612.9 386.1L612.0 386.3L609.7 386.4L609.0 385.3L607.8 385.9L607.2 386.2L605.2 385.2L604.4 385.2L603.2 385.7L602.6 386.7L601.6 387.9L600.9 386.7L600.1 384.8L599.1 383.8L599.0 383.1L598.2 382.5L596.2 381.9L595.1 382.2L594.1 381.6L593.7 380.0L591.9 379.2L591.2 378.7L590.3 377.4L590.1 375.6L588.2 374.7L587.6 373.9L587.3 372.7L586.0 371.9L585.7 371.4L585.4 370.1L585.6 368.6L586.1 367.4L586.7 366.8L587.8 364.7L588.6 363.5L588.9 363.4L589.6 361.1L590.4 359.6L590.5 359.2L591.1 357.8L592.2 356.1L592.7 355.0L593.4 354.8L593.7 353.2L594.7 352.4L595.7 351.7L595.8 351.4L596.3 350.5L597.7 349.6L598.5 349.4L598.5 347.6L598.1 346.6L598.5 345.1L598.4 343.9L597.1 343.2L597.2 341.2L597.2 339.9L597.7 338.9L597.6 337.9L596.1 337.3L596.7 334.5L597.1 336.7L598.3 335.3L599.2 334.3L600.0 333.6L601.4 331.7L602.5 331.0L602.8 330.7L603.7 328.9L605.1 328.3L605.5 327.8L605.6 326.1L606.8 325.2L607.8 324.4L607.9 323.7L608.5 321.8L609.7 321.1L610.2 320.6L610.5 318.7L611.5 318.3L612.5 317.7L612.9 316.7L613.4 315.5L614.5 314.8L615.2 314.1L615.7 312.0L616.9 311.6L618.4 311.3L619.5 310.0L620.3 309.6L621.6 308.9L622.9 307.8L623.4 306.2L624.2 306.0L625.0 306.1L625.9 305.7L627.3 304.7L627.3 303.5L627.0 303.0L628.0 301.0L628.7 299.8L627.3 298.4L626.4 297.1L625.5 296.5L626.1 295.8L625.4 294.0L626.3 292.7L627.0 292.8L626.6 291.9L625.9 290.3L625.5 288.8L624.9 287.7L624.1 286.5L622.7 285.2L622.5 284.0L622.5 283.2L622.6 282.4L620.9 281.0L620.0 279.2L619.3 277.7L619.9 276.9L619.5 276.4L618.5 275.3L617.8 273.5L618.3 271.7L618.8 270.4L618.1 269.8L617.9 269.1L617.4 267.7L617.3 266.1Z" fill="#ebebeb" stroke="#bdbdbd" stroke-width="1.15" stroke-linejoin="round"/>
<path d="M628.7 299.6L629.1 299.9L630.4 300.0L631.2 301.2L632.7 301.9L633.1 302.0L634.4 302.7L635.1 303.5L636.6 304.3L637.1 304.9L637.9 305.6L638.8 306.7L640.3 307.2L640.6 307.8L641.4 309.4L643.8 310.0L644.5 309.4L646.0 309.4L647.4 309.3L648.4 308.8L650.4 309.3M661.3 254.5L661.3 256.0L661.4 256.6L660.7 259.0L660.5 259.7L659.9 260.9L660.1 261.7L659.4 263.5L659.8 264.6L659.5 265.1L660.6 265.8L661.0 266.6L660.7 268.1L661.3 270.2L661.7 271.0L663.1 271.3L663.0 272.7L663.5 274.3L664.0 274.9L665.6 275.2L665.9 276.2L667.0 277.4L667.9 278.0L669.4 278.7L669.9 280.3L670.0 282.1L669.7 283.2L669.8 283.6L670.6 285.0L670.4 286.0L670.4 287.6L670.3 288.5L669.8 289.4L668.7 290.6L667.8 291.9L667.5 292.5L667.0 294.4L666.8 295.6L666.1 296.3L666.3 297.4L665.3 297.8L664.5 297.5L663.3 296.9L661.4 297.6L660.0 296.8L658.5 297.4L657.7 297.4L657.4 298.8L656.0 298.9L654.5 300.0L653.8 301.1L653.0 301.2L651.6 301.7L650.6 302.7L649.7 304.4L650.2 304.5L650.2 306.1L649.3 307.3L650.4 309.3M650.4 309.3L650.8 310.1L650.6 310.8L650.5 312.3L651.4 313.7L652.8 314.4L653.1 316.0L652.9 317.9L653.1 318.5L654.4 318.8L655.6 320.4M655.6 320.4L655.1 322.4L654.5 323.3L653.2 323.6L653.3 325.1L652.7 325.7L651.7 326.4L651.1 326.7L650.2 328.0L649.0 328.7L649.1 329.5L648.0 329.5L647.6 331.1L647.6 332.4L646.4 333.2L644.8 333.7L644.2 335.5L643.4 336.7L641.7 336.8L640.0 338.2M655.6 320.4L655.7 319.6L656.3 319.2L657.4 318.5L657.3 316.6L657.7 316.2L659.0 315.1L659.7 314.9L661.0 313.7L661.8 313.7L662.9 314.3L665.0 314.0L666.1 312.4L666.6 312.6L668.0 312.8L669.2 312.5L670.6 312.2L672.0 312.4L672.6 312.6M672.6 312.6L672.9 314.9L672.9 315.7L672.4 317.2L672.8 317.8L672.7 319.9L672.9 320.7L673.0 321.7L672.2 323.3L673.4 324.0L674.3 326.2L673.9 326.9L673.9 327.4L673.6 328.7L674.0 329.5L674.6 331.9L673.5 332.6L673.7 333.6L674.0 334.9L674.2 336.6L673.4 338.0L672.9 337.9L673.8 339.3L673.5 340.0L674.0 341.7L674.2 343.0L674.0 343.6L674.0 345.5L673.6 347.0L672.7 348.8L673.4 349.1L673.4 351.1L673.3 352.0L674.0 353.7L674.0 353.9L673.8 355.5L673.6 357.6L674.1 359.1L675.3 360.2L675.0 360.6L674.6 361.7L674.9 363.4L674.8 364.2L675.9 365.9L676.4 366.6L675.7 367.4L676.1 369.2M672.6 312.6L674.8 312.5L676.2 312.0L677.0 310.5L678.2 310.8L679.7 310.1L680.8 309.2L680.9 307.8L681.3 307.6L682.8 307.3L683.9 305.6L684.5 305.2L685.8 304.5L687.4 302.7L688.9 302.1L689.2 302.0L689.8 302.4L690.9 302.0L692.2 300.9L694.1 301.5L695.6 301.9M695.6 301.9L695.5 301.1L695.0 299.5L695.9 297.9L696.1 297.1L695.1 295.7L695.0 294.5L695.8 292.4L695.7 291.9L695.1 291.4L695.4 290.3L695.6 288.2L695.8 287.8L696.1 286.5L696.4 285.4L697.5 283.7L697.4 283.1L697.3 281.8L698.6 280.6L699.2 279.1L699.6 278.3L699.9 277.5L700.3 275.2L700.9 274.8L700.7 273.8L701.8 272.6L703.2 270.9L703.4 270.3L703.8 269.1L705.3 267.3L705.9 267.3L705.8 266.0M695.6 301.9L695.3 302.7L695.7 303.6L695.9 305.2L697.4 307.2L697.8 308.3L698.5 309.0L698.8 309.7L700.3 310.6L700.5 311.3L701.3 311.9L702.7 313.1L704.2 314.5L703.8 315.8L703.5 317.5L702.9 318.5L702.5 319.1L703.2 320.3L703.7 321.8L704.7 323.5L704.6 324.8L705.5 325.5L706.3 326.0L707.7 326.7L707.6 327.8M707.6 327.8L707.0 330.0L707.1 331.0L707.3 332.2L706.2 332.7L706.4 334.3L707.9 334.9L708.5 336.4L708.5 337.5L707.9 338.9L708.9 339.6L709.4 340.4L709.6 342.5L709.8 342.7L708.6 344.1L708.6 344.6L708.5 346.9L708.9 347.9L706.8 348.0L705.7 347.8L705.7 349.5L704.3 349.4L702.1 349.2L700.5 349.8L699.7 351.6L699.6 352.2L699.2 353.1L698.5 354.2L699.1 355.8L699.5 356.8L699.4 357.4L699.0 358.4L699.2 359.9L699.0 361.8L699.4 362.6L699.4 363.8L699.0 364.8L700.3 366.6M707.6 327.8L708.7 328.3L710.4 327.8L711.0 327.7L712.7 327.8L713.8 326.6L714.1 327.3L716.4 327.0L717.7 327.8L719.3 326.2L720.5 326.4L720.5 326.8L722.5 327.1L724.3 326.2L725.8 325.9L727.0 326.2L727.8 326.1L729.2 326.0L730.5 325.6L732.6 325.2L732.0 326.1L732.1 327.4L733.6 329.3L733.4 330.3L734.2 331.1L733.7 332.0L734.7 332.9L736.2 332.7L737.8 333.8L738.9 333.4L739.9 332.9L741.5 332.7L742.8 332.5L744.2 332.6M740.9 276.2L740.1 277.9L740.7 278.2L739.9 280.0L740.5 280.9L741.6 281.9L741.9 283.7L742.6 284.7L742.9 285.0L743.5 285.7L743.6 287.1L744.0 288.9L744.0 290.6L744.3 291.6L745.3 292.0L745.6 292.9L745.9 294.9L745.9 296.4L744.7 297.5L744.3 298.2L744.5 299.8L743.9 301.0L743.5 302.5L743.0 302.6L744.1 305.0L743.7 305.7L743.2 307.0L744.0 306.9L744.1 307.8L745.6 308.7L747.1 308.9L748.0 309.4L748.1 310.3L747.8 311.5L748.7 313.0L748.5 314.9L748.6 315.8L749.8 316.2L749.0 317.5L748.5 318.1L749.0 320.4L748.9 320.8L750.0 322.3L748.8 322.9L748.4 324.4L748.2 324.9L747.5 326.0L746.8 327.2L746.1 328.6L745.5 329.1L744.7 330.7L744.2 332.6M744.2 332.6L744.9 333.4L744.7 334.1L745.5 335.8L746.0 337.3L745.1 337.8L745.9 338.9L746.4 339.8L745.8 340.1L746.2 341.3L746.5 343.3L748.0 344.1L748.2 344.6L749.1 345.8M766.0 276.6L765.7 278.5L765.7 280.0L766.8 281.1L766.1 281.9L765.8 282.4L766.5 283.7L768.1 285.7L768.6 287.1L769.1 287.8L769.2 288.9L770.1 290.4L770.4 291.4L771.4 292.1L771.3 293.7L772.6 292.6L774.6 293.6L775.1 293.5L776.2 294.1L777.7 295.8L778.8 296.5L779.8 296.8L780.5 297.8L781.7 298.8L781.8 300.3L782.3 301.2L782.2 302.3L784.0 303.2L785.0 302.5L786.3 302.3L787.0 302.9L788.1 303.9L790.4 302.5L791.7 300.8L792.1 301.2L793.1 300.8L794.8 300.0L795.2 300.7L796.6 301.7L797.2 303.0L797.7 304.0L797.9 304.8L799.7 305.5L800.5 306.6L801.3 308.0L801.2 308.2M828.8 239.5L828.2 241.0L828.7 241.8L828.6 244.1L828.7 244.5L827.9 245.7L828.4 246.2L829.1 247.4L829.4 248.6L830.4 250.4L829.4 250.5L828.8 251.3L828.3 252.3L827.2 253.6L825.8 253.5L824.9 254.7L823.9 256.3L822.4 256.5L822.2 257.9L822.9 259.2L822.0 260.9L821.8 261.4L822.6 262.3L822.9 263.6L822.8 264.9L822.3 266.3L822.4 267.3L822.7 268.4L823.0 269.9L822.0 271.6L822.1 271.6L821.8 273.7L821.8 274.7L821.0 276.2L820.9 276.5L820.5 278.0L820.5 279.5L820.0 280.5L819.7 281.1L819.6 283.2L818.8 284.0L820.0 284.9L820.4 286.4L821.2 287.3L822.3 287.5L823.2 288.4L822.9 290.5L822.8 292.2L823.8 293.1L824.4 294.4L823.6 294.9L823.4 296.7L823.8 297.9L823.7 298.4L822.8 299.4L821.9 301.4L822.0 301.8L821.1 302.9M801.2 308.2L802.7 307.9L804.2 306.8L805.4 306.7L806.6 307.1L807.1 307.3L808.6 307.9L810.3 308.8L811.3 308.9L812.6 308.0L813.6 308.1L814.6 308.2L816.4 307.6L817.0 308.1L817.9 306.6L819.1 306.0L819.7 305.7L820.0 303.7L821.1 302.9M801.2 308.2L800.2 309.1L800.7 310.9L800.6 312.2M800.6 312.2L799.4 313.1L798.9 314.5L798.4 315.6L797.1 316.5L796.4 317.8L796.5 319.6L796.1 320.3L795.6 321.2L794.6 322.7L793.4 322.6L792.0 322.9L791.0 323.8L790.3 325.3L789.8 325.8L789.5 325.9L788.5 324.7L787.4 323.8L786.0 323.8L785.8 322.8L784.5 321.7L783.6 321.5L783.6 321.7L783.4 323.4L782.2 324.3L781.8 325.5L781.5 326.0L781.9 327.7L781.1 328.9L780.5 329.7L780.5 330.4L779.5 332.6L779.6 333.2L779.2 334.5L779.3 335.4L778.3 336.9L776.8 337.7L776.5 338.4L775.8 340.5L774.4 341.2L773.6 340.5L772.8 341.4L771.8 342.0L770.0 342.6L768.2 341.4L767.4 341.9L766.4 343.6L765.2 343.6L763.9 343.2L762.2 342.8L761.2 343.8L760.2 343.3L758.6 342.8L757.1 343.2L756.0 343.4L755.4 343.0L754.7 343.6L753.4 344.1L751.5 344.7L750.1 344.3L749.9 345.4L749.1 345.8M800.6 312.2L801.3 312.9L802.0 314.3L802.0 315.5L803.2 316.1L804.8 316.9L805.5 318.0L805.8 319.6L806.3 320.7L807.2 321.4L807.9 322.8L808.1 324.0L808.8 324.1L809.5 324.7L810.8 326.0L810.6 327.1L810.9 328.3L810.9 329.5L812.8 330.6L813.6 332.0L814.1 333.3L813.5 334.0L813.6 334.6L814.0 336.4L813.9 338.0L812.9 338.2L811.9 339.7L811.5 340.8L810.2 341.1L808.8 341.4L809.0 343.3L810.5 344.0L811.1 344.4L812.4 345.3L813.4 346.3L815.1 346.4L815.5 346.8M821.1 302.9L823.2 302.8L824.4 304.3L826.3 303.7L826.6 303.1L828.0 303.9L829.0 304.0L830.9 303.9L831.0 304.2L832.5 305.7L834.2 304.1L835.4 303.5L837.1 303.2L838.1 303.7L837.9 303.5L839.8 302.5L841.1 303.0L842.9 302.8L844.0 303.3L844.6 303.2L845.7 304.5L846.4 305.3L847.3 305.8L847.2 306.3L847.9 307.0L849.0 308.1L850.5 309.4L850.8 310.5L851.5 311.4L852.1 312.8L853.3 314.1L853.3 314.6L854.2 315.3L855.3 316.6M855.3 316.6L857.1 316.7L858.0 314.9L859.0 315.0L860.5 315.4L861.4 315.0L862.1 313.0L864.1 313.3L866.0 313.5L866.5 312.9L866.7 311.5L868.2 311.6L869.9 311.5L871.3 311.3L872.7 310.4L873.6 309.8L874.1 309.6L875.2 309.3L877.3 308.8M855.3 316.6L857.0 317.2L857.4 316.4L858.8 316.4L859.9 316.8L860.4 317.7L861.0 319.5L861.1 320.1L860.9 321.1L861.1 322.1L861.8 323.5L863.1 324.3L863.7 324.5L864.2 325.6L865.5 327.1L867.0 327.5L867.7 327.7L867.8 329.0L869.2 330.3L870.1 331.0L871.0 332.0L870.9 334.2L872.6 335.0L871.8 336.2L871.9 337.4L871.8 339.1L871.9 339.7L870.7 341.2L869.6 342.6L868.9 343.0L867.0 342.8L865.3 343.1L863.9 344.8L863.7 344.8L863.5 346.7L862.6 348.1M599.6 349.8L600.1 350.4L601.0 351.7L600.2 353.2L601.4 353.9L601.6 355.4L603.4 357.1L603.5 358.4L604.3 358.9L605.5 359.8L606.5 360.5L607.7 360.7L608.5 361.0L610.5 361.8L611.7 361.9L612.5 360.9L614.0 361.9L615.2 362.9L617.3 362.4M617.3 362.4L617.5 363.5L617.9 365.1L619.5 365.8L619.8 365.9L620.7 367.1L621.6 368.3L623.8 368.6L624.3 369.0L625.0 369.9L626.6 370.5L628.1 370.5L628.9 371.9L629.6 372.9L631.8 373.6L632.6 374.8L633.3 375.4L633.5 375.8L634.9 376.5L635.3 377.2L635.9 378.2L636.0 379.0L637.6 380.0L638.3 381.2L638.6 383.2L637.8 385.0L638.4 385.2L638.8 386.2L639.1 387.3M617.3 362.4L616.7 361.7L616.0 360.2L616.0 358.8L616.4 358.3L616.1 357.0L616.3 355.4L617.2 353.8L618.1 352.9L618.6 351.9L619.3 350.2L620.5 350.0L621.3 349.5L622.1 349.2L623.7 348.6L625.1 349.3L625.8 348.5L627.5 348.4L628.3 348.3L629.1 347.4L631.1 347.9L631.8 347.2L632.7 347.6L634.0 345.5L634.1 345.5L634.5 344.6L634.8 343.0L634.1 341.6L633.8 340.2L633.7 340.0L634.5 338.9L635.4 337.7L635.9 336.1L637.7 337.7L638.4 337.5L639.6 337.3L639.9 338.1M639.9 338.1L641.4 338.9L642.3 340.2L642.9 340.6L642.1 341.2L642.0 342.3L643.1 344.0L643.9 346.0L644.5 346.6L643.9 347.1L644.1 348.3L644.6 349.0L646.0 350.4L647.1 351.8L647.4 352.8L647.8 353.9L649.0 355.3L649.9 356.1L650.4 356.0L650.8 356.5L652.6 357.7L653.9 357.5L654.5 357.9L654.8 359.4L656.6 360.4L657.7 360.5L658.9 361.3L659.0 363.2L660.4 364.3L660.6 364.5M660.6 364.5L660.6 365.2L660.5 366.7L660.2 368.4L659.7 369.8L660.1 370.6L660.2 372.6L659.3 372.6L657.6 373.3L656.0 373.5L655.5 374.6L655.2 375.9L653.8 376.2L652.9 377.4L652.9 378.3L652.0 379.2L650.6 379.5L650.2 381.0L650.0 382.4L648.6 382.6L647.4 384.4L647.7 385.7L647.2 386.7L646.8 386.8L646.0 388.3L646.2 389.8L645.6 390.7L645.8 391.3L645.1 392.2L645.5 394.0L646.2 394.6M660.6 364.5L662.3 365.1L662.7 365.6L665.2 365.3L666.0 365.5L667.5 365.7L667.6 365.7L669.9 366.5L670.6 367.0L671.5 368.0L672.2 368.3L673.5 368.1L675.0 369.1L676.1 369.2M676.1 369.2L676.8 368.6L679.1 369.3L679.9 370.2L681.1 369.6L682.7 369.0L683.2 367.8L683.7 368.4L685.7 367.7L687.6 367.6L688.2 367.9L689.6 368.1L691.1 367.8L693.3 367.9L693.6 368.0L694.0 367.6L695.7 366.4L697.0 366.0L698.3 366.9L700.3 366.6M700.3 366.6L700.2 367.6L699.5 367.6L699.8 369.1L700.7 370.6L702.4 371.5M749.1 345.8L748.6 346.9L747.7 347.6L748.1 349.2L748.8 350.7L748.2 352.2L748.3 353.2L748.6 353.4L749.6 354.4L750.9 356.6L751.6 358.4L751.1 358.9L751.1 359.8L752.2 360.9L753.5 361.7L754.1 363.0L753.4 365.0L753.5 366.1L754.4 366.5L755.5 368.1L754.9 369.1L755.1 370.9M755.1 370.9L756.1 370.3L757.2 370.0L759.4 369.7L760.6 370.4L760.9 369.1L762.1 368.2L763.8 368.5L764.7 367.6L765.1 366.7L766.4 365.9L768.1 364.7L769.0 363.6L769.9 362.8L771.3 363.2L772.7 362.1L773.3 361.5L774.7 361.1L776.1 362.4L776.9 362.7L778.2 361.8L778.5 361.2L780.8 361.7L782.4 361.5L783.1 361.4L784.2 360.6L785.0 360.0L785.8 360.1L787.8 360.2L789.2 358.8L789.8 357.8L791.0 357.6L792.0 357.7L792.5 356.8L793.7 355.8L794.8 355.4L795.5 355.9L797.4 355.6L799.5 354.1L800.0 353.8L800.1 354.1L801.6 353.6L803.8 352.0L805.0 352.6L806.2 352.0L807.4 352.1L807.8 352.6L809.5 353.5L810.8 355.2L811.6 354.7L811.9 353.8L814.1 354.7L814.9 355.1L816.0 354.5L816.8 352.7L816.8 351.7L817.5 350.9L816.3 349.9L816.1 348.8L815.5 346.8M755.1 370.9L754.6 372.0L753.8 373.0L752.7 374.5L752.6 375.5L751.9 375.9L750.8 376.7L750.2 379.0L749.6 379.4L749.3 380.2L748.5 381.3M748.5 381.3L747.3 382.8L746.8 381.8L745.0 381.9L743.7 381.8L742.7 383.4L741.1 383.2L740.2 382.6L738.7 382.6L737.8 382.4L736.7 381.3L736.0 380.6L735.7 381.9L735.1 382.7L733.4 383.3L731.8 383.2M748.5 381.3L750.3 381.2L751.4 381.1L753.1 381.3L754.3 380.7L754.3 380.3L755.9 381.2L757.1 381.2L758.7 380.7L759.6 381.9M759.6 381.9L759.6 382.5L760.4 383.9L761.0 384.9L762.1 385.5L761.8 387.4L761.7 388.8L761.9 389.2L763.1 390.4L764.2 391.6L763.7 392.6L763.6 394.5L764.1 396.2L765.9 396.5L766.2 396.9L766.8 398.1L767.9 399.2L769.9 399.3L770.7 400.2L771.0 401.5L772.0 402.0L772.6 402.2L773.4 403.3L773.6 404.6L774.8 405.4L775.9 406.4L776.9 407.9L776.7 409.3L777.4 410.3L778.3 410.8L779.9 411.6L780.2 412.5L781.7 413.2L782.1 413.9L783.1 414.7L782.8 416.1L781.7 417.1L781.3 417.9L780.8 418.7L779.2 419.7L778.6 421.5L778.2 422.6L778.4 423.4L778.2 424.2L779.3 426.4L780.1 428.3L780.3 428.3L780.1 429.7L779.8 430.8L780.1 432.1L780.3 433.2L780.5 434.3L781.1 435.5L781.4 436.8M759.6 381.9L760.5 382.3L762.4 381.6L763.8 381.0L764.7 381.1L765.8 381.3L765.8 381.3L767.6 381.1L769.4 380.8L770.5 381.0L772.1 380.0L772.3 380.6L773.3 380.6L775.3 380.1L776.4 379.2L777.8 379.2L779.3 379.7L779.8 379.8L782.0 380.1L783.0 381.2L783.6 381.4L785.0 380.7L786.6 381.2L787.5 382.1L788.3 382.4L788.9 382.5L791.1 383.2L791.7 384.2L792.4 384.1L792.7 384.9L793.9 386.1L794.8 387.1L794.7 388.2L794.5 389.0L794.7 390.7L796.1 392.1L797.2 393.5L798.5 393.4L799.5 393.2L801.1 393.3L801.7 393.0L803.2 392.6L804.6 392.6L805.2 391.8L806.8 391.6L808.5 391.5L809.1 390.9L810.2 390.1L811.7 389.8L812.3 389.8L812.9 389.1L813.8 387.6L814.6 386.9L816.3 387.1L817.8 387.3L818.4 386.3L819.1 386.0L820.1 386.5M815.5 346.8L816.9 347.2L817.5 347.4L819.7 348.1L820.0 348.5L821.1 349.1L822.2 349.6L823.9 349.6L824.6 350.6L825.8 351.6L826.0 352.2L827.1 352.9L827.2 354.4L828.1 355.0L829.2 355.0L830.5 355.4L832.6 355.8L833.0 356.2L834.1 355.7L835.3 355.9L836.7 357.3L837.6 357.6L838.6 357.6M838.6 357.6L837.4 358.9L837.2 360.9L836.1 360.6L835.5 361.2L834.3 361.5L833.7 363.0L833.4 364.4L833.3 365.0L834.9 365.6L836.3 366.0L834.9 366.4L833.0 368.2L831.4 368.1L830.9 367.9L830.6 369.4L830.1 371.1L829.7 371.9L829.6 373.1L830.8 375.0L830.7 376.7L830.7 377.1L831.0 377.7L830.1 379.3L829.4 380.7L828.5 381.2L828.0 381.6L826.9 381.4L825.3 382.5L823.6 383.0L822.7 383.7L822.1 384.3L821.3 386.2L820.1 386.5L820.8 388.5L821.2 389.8L821.4 391.2L820.8 391.4L821.3 392.8L821.4 394.2L820.5 395.6L821.4 396.8L821.8 397.3L822.2 399.2L822.5 400.0L822.1 400.9M846.6 404.0L848.0 402.6L849.1 402.4L850.2 402.0L851.2 402.6L852.2 402.3L854.0 401.0L854.8 401.4L856.0 401.5L857.6 402.3L858.9 400.8L860.5 400.8L861.2 400.8L861.7 400.3L862.6 398.5L861.7 397.1L861.8 395.4L860.9 394.3L860.9 394.1L861.1 392.8L860.3 390.6L860.2 390.2L861.1 388.9L861.0 388.0L860.6 386.3L860.5 385.0L861.0 384.2L861.1 383.0L860.9 382.7L861.7 381.7L862.1 381.5L863.5 382.3L864.7 381.6L866.8 382.1L867.9 382.1L868.5 382.0L870.0 381.4L870.8 381.9L872.8 382.1L872.8 382.8L874.3 382.5L875.2 382.1L877.4 382.8L878.7 382.0L879.5 382.0L880.9 382.9L881.8 382.3L883.3 382.5L884.1 383.5L885.1 384.7L886.2 385.0L887.2 386.3L886.6 387.9L886.8 388.7L887.6 389.6L889.1 390.0L890.3 390.3L891.0 391.1L891.6 392.4L893.3 392.0L894.7 392.1L895.4 392.3L897.2 391.3M897.2 391.3L897.4 392.5L898.8 393.8L899.0 395.4L899.7 396.6L899.8 396.8L900.7 397.7L901.5 398.9L901.6 399.7L902.2 400.7L902.6 400.6L904.8 401.1L905.6 402.2L906.4 402.3L907.3 402.7L909.4 404.1L910.1 404.4L910.3 405.3L909.8 405.9L909.5 406.4L908.4 408.4L907.7 408.2L907.2 408.4L905.7 408.6L904.6 410.0L904.7 410.9L905.7 411.9L905.5 413.8L906.0 414.5L906.0 415.3L907.1 416.3L907.4 417.4L908.1 419.3L907.9 420.2L908.3 421.3M897.2 391.3L897.7 391.1L897.7 389.3L898.3 387.7L899.3 387.1L900.2 386.3L901.3 385.8L902.5 384.6L902.9 384.5L903.2 383.3L903.4 381.0L904.1 380.8L904.8 379.1L904.1 377.9L903.9 376.0L903.6 374.5L903.6 374.3L904.1 373.0L903.7 371.4L904.4 370.3L904.6 369.5L903.0 368.0L901.7 367.3L900.8 367.3L900.7 366.3L899.7 364.4L900.2 362.7L899.7 360.8M899.7 360.8L898.5 362.1L897.5 363.7L896.7 364.2L896.2 364.4L895.3 365.2L894.0 366.5L893.2 367.3L891.3 366.7L890.0 365.2L889.9 363.9L889.4 363.4L888.9 363.1L887.9 361.9L887.6 360.8L887.2 359.7L886.4 358.3L885.7 357.3L884.8 356.4L885.0 355.1L884.2 354.6L883.3 354.6L881.1 354.2L879.8 354.9L879.0 354.6L877.5 354.7L875.8 353.9L874.5 353.3L873.8 353.1L872.8 352.0L870.4 351.6L870.2 352.1L869.2 351.3L868.2 349.9L866.2 349.5L866.1 349.2L865.0 348.2L862.6 348.1M862.6 348.1L861.4 348.7L861.2 347.4L859.8 348.0L859.1 348.2L857.3 349.6L855.0 348.8L854.4 348.7L854.1 349.9L853.1 351.5L851.7 351.2L850.5 351.7L849.4 352.3L849.5 354.2L849.5 354.5L848.8 356.4L848.8 358.1L848.3 359.3L847.7 360.3L846.8 360.1L846.2 359.8L844.5 360.2L843.4 360.2L842.3 359.1L841.7 359.0L839.6 358.5L838.6 357.6M899.7 360.8L901.3 361.4L902.2 361.1L903.6 360.5L905.1 359.3L905.5 359.7L906.1 359.2L907.0 358.6L908.1 357.7L909.7 357.5L911.0 356.2L911.7 355.0L913.0 354.4L914.0 353.7L914.6 352.6L915.6 351.7L916.4 351.4L916.9 349.8L917.6 348.5L918.0 348.3L919.1 347.7L920.1 347.2L920.9 346.8L922.6 346.6L923.3 346.3L924.7 346.0L926.1 346.1M929.2 321.6L928.8 324.1L928.1 324.8L927.8 326.4L928.5 327.6L928.0 329.4L927.1 330.1L927.4 330.9L926.9 332.8L926.2 333.9L926.5 334.5L925.8 335.8L925.1 337.8L924.2 337.9L924.6 339.5L924.6 340.0L925.4 341.7L925.7 343.4L925.5 343.8L926.0 346.0L924.8 347.5M924.8 347.5L925.1 349.0L926.5 349.4L927.0 349.4L927.7 350.6L927.2 351.9L927.9 353.1L928.5 354.3L929.6 354.8L930.2 355.9L931.0 357.4L932.1 358.2L933.6 359.0L933.1 360.1L932.9 361.2L933.2 362.5L934.1 364.2L934.7 364.9L934.0 365.6L934.4 366.9L935.0 367.8L935.2 369.6L935.9 371.5L936.0 371.6L936.8 372.3L936.9 373.8L938.7 374.9L939.5 375.3L940.4 376.2L940.2 377.5L941.4 378.5L942.1 379.1L943.0 380.2L943.5 381.9L944.9 383.1L946.5 383.6L946.5 384.7L947.6 386.1L948.9 386.9L949.6 387.9L949.7 388.8L950.7 390.3" fill="none" stroke="#a0a0a0" stroke-width="1.2" stroke-linejoin="round" stroke-linecap="round"/>
<path d="M781.7 436.8L782.9 436.5L784.1 436.8L785.6 436.9L786.8 436.8L788.0 436.3L789.3 435.8L790.5 435.8L791.6 435.0L792.7 433.8L793.7 433.1L794.5 432.3L795.6 431.2L796.6 430.5L797.5 429.5L798.7 428.4L799.7 427.6L800.2 426.8L801.0 426.1L802.1 424.7L803.7 425.4L805.4 424.8L806.4 423.5L807.0 422.9L808.1 423.9L810.0 423.0L811.3 422.5L812.5 422.0L813.5 422.7L813.8 422.5L815.8 422.4L817.1 422.9L817.9 421.0L818.3 419.9L818.9 419.2L818.5 416.7L818.7 416.1L818.6 414.7L819.3 413.7L820.3 412.0L820.7 412.1L821.6 411.4L821.9 409.1L822.6 408.0L821.6 406.8L821.2 405.7L821.7 404.2L822.3 402.7L821.5 402.0L822.1 400.9L824.5 400.3L825.9 400.4L827.1 400.5L827.8 400.4L828.6 401.3L830.0 401.7L831.1 400.9L831.8 399.7L833.2 400.0L834.0 400.8L835.6 401.0L836.9 401.4L838.1 402.8L838.9 402.9L840.8 401.9L842.1 402.5L843.2 402.9L843.6 403.0L845.0 402.9L846.6 404.0L847.1 404.9L847.8 405.3L847.1 406.6L848.9 406.7L850.1 407.6L850.9 408.3L851.4 408.0L851.0 409.5L852.1 410.9L852.4 412.4L853.2 414.6L853.0 414.9L853.4 415.0L854.0 416.1L855.2 417.2L856.0 418.5L856.3 419.5L857.1 420.3L858.1 421.4L858.6 422.8L857.9 424.1L857.5 424.9L857.0 426.5L856.4 427.8L856.7 428.6L858.1 429.3L858.8 430.2L859.6 431.1L860.3 431.9L861.4 432.6L862.3 433.3L863.3 434.1L863.8 435.1L864.7 436.0L865.5 437.1L866.3 438.3L867.2 438.9L868.4 439.6L869.4 440.4L870.2 441.2L870.7 442.2L871.3 443.1L871.9 444.2L872.7 445.1L872.1 446.3L871.5 447.3L870.9 448.6L870.0 449.4L869.0 450.3L867.9 451.5L868.0 452.5L868.1 453.8L867.9 455.1L867.8 456.6L866.6 456.4L865.4 456.7L864.2 456.9L862.8 456.8L861.3 456.7L860.3 456.4L859.7 455.3L859.2 453.7L858.5 452.2L858.2 451.3L857.8 450.6L857.3 449.5L856.3 449.5L855.0 449.2L854.0 449.9L853.2 450.7L852.3 451.2L851.4 450.5L850.5 449.9L849.1 449.5L848.3 448.8L847.4 448.2L846.5 447.5L845.2 447.0L844.3 446.4L843.4 445.6L842.5 445.0L841.3 444.5L840.0 444.1L838.9 443.6L837.5 443.2L836.3 443.6L835.2 443.6L834.1 443.8L833.7 445.4L833.4 446.7L833.5 447.9L833.1 449.3L831.3 449.5L830.4 450.0L829.4 450.1L828.1 450.6L826.6 451.0L825.5 451.7L824.2 451.7L823.1 452.1L822.2 452.6L821.0 453.3L819.5 453.3L818.3 453.7L817.3 454.2L816.2 454.7L815.0 454.9L813.9 454.6L812.5 454.5L811.3 454.3L810.4 454.3L809.1 454.0L808.1 453.9L806.6 453.6L805.8 453.1L804.6 452.9L803.5 452.6L802.1 452.4L801.0 451.9L800.0 451.7L798.8 451.5L797.4 450.9L796.4 450.3L795.1 450.2L794.1 449.7L792.6 449.1L791.6 448.8L790.5 448.4L789.3 447.7L787.9 447.3L786.9 446.9L785.7 446.2L784.5 445.5L783.8 444.7L783.3 443.7L782.7 442.5L782.1 441.4L781.7 440.3L781.6 439.2L781.2 438.1L781.0 436.8Z" fill="#e6f3fc" stroke="none"/>
<path d="M833.1 449.3L831.3 449.5L830.4 450.0L829.4 450.1L828.1 450.6L826.6 451.0L825.5 451.7L824.2 451.7L823.1 452.1L822.2 452.6L821.0 453.3L819.5 453.3L818.3 453.7L817.3 454.2L816.2 454.7L815.0 454.9L813.9 454.6L812.5 454.5L811.3 454.3L810.4 454.3L809.1 454.0L808.1 453.9L806.6 453.6L805.8 453.1L804.6 452.9L803.5 452.6L802.1 452.4L801.0 451.9L800.0 451.7L798.8 451.5L797.4 450.9L796.4 450.3L795.1 450.2L794.1 449.7L792.6 449.1L791.6 448.8L790.5 448.4L789.3 447.7L787.9 447.3L786.9 446.9L785.7 446.2L784.5 445.5L783.8 444.7L783.3 443.7L782.7 442.5L782.1 441.4L781.7 440.3L781.6 439.2L781.2 438.1L781.0 436.8L781.7 436.8" fill="none" stroke="#979ca0" stroke-width="1.1" stroke-linejoin="round" stroke-linecap="round"/>
<path d="M781.7 436.8L782.9 436.5L784.1 436.8L785.6 436.9L786.8 436.8L788.0 436.3L789.3 435.8L790.5 435.8L791.6 435.0L792.7 433.8L793.7 433.1L794.5 432.3L795.6 431.2L796.6 430.5L797.5 429.5L798.7 428.4L799.7 427.6L800.2 426.8L801.0 426.1L802.1 424.7L803.7 425.4L805.4 424.8L806.4 423.5L807.0 422.9L808.1 423.9L810.0 423.0L811.3 422.5L812.5 422.0L813.5 422.7L813.8 422.5L815.8 422.4L817.1 422.9L817.9 421.0L818.3 419.9L818.9 419.2L818.5 416.7L818.7 416.1L818.6 414.7L819.3 413.7L820.3 412.0L820.7 412.1L821.6 411.4L821.9 409.1L822.6 408.0L821.6 406.8L821.2 405.7L821.7 404.2L822.3 402.7L821.5 402.0L822.1 400.9L824.5 400.3L825.9 400.4L827.1 400.5L827.8 400.4L828.6 401.3L830.0 401.7L831.1 400.9L831.8 399.7L833.2 400.0L834.0 400.8L835.6 401.0L836.9 401.4L838.1 402.8L838.9 402.9L840.8 401.9L842.1 402.5L843.2 402.9L843.6 403.0L845.0 402.9L846.6 404.0L847.1 404.9L847.8 405.3L847.1 406.6L848.9 406.7L850.1 407.6L850.9 408.3L851.4 408.0L851.0 409.5L852.1 410.9L852.4 412.4L853.2 414.6L853.0 414.9L853.4 415.0L854.0 416.1L855.2 417.2L856.0 418.5L856.3 419.5L857.1 420.3L858.1 421.4L858.6 422.8L857.9 424.1L857.5 424.9L857.0 426.5L856.4 427.8L856.7 428.6L858.1 429.3L858.8 430.2L859.6 431.1L860.3 431.9L861.4 432.6L862.3 433.3L863.3 434.1L863.8 435.1L864.7 436.0L865.5 437.1L866.3 438.3L867.2 438.9L868.4 439.6L869.4 440.4L870.2 441.2L870.7 442.2L871.3 443.1L871.9 444.2L872.7 445.1L872.1 446.3L871.5 447.3L870.9 448.6L870.0 449.4L869.0 450.3L867.9 451.5L868.0 452.5L868.1 453.8L867.9 455.1L867.8 456.6L866.6 456.4L865.4 456.7L864.2 456.9L862.8 456.8L861.3 456.7L860.3 456.4L859.7 455.3L859.2 453.7L858.5 452.2L858.2 451.3L857.8 450.6L857.3 449.5L856.3 449.5L855.0 449.2L854.0 449.9L853.2 450.7L852.3 451.2L851.4 450.5L850.5 449.9L849.1 449.5L848.3 448.8L847.4 448.2L846.5 447.5L845.2 447.0L844.3 446.4L843.4 445.6L842.5 445.0L841.3 444.5L840.0 444.1L838.9 443.6L837.5 443.2L836.3 443.6L835.2 443.6L834.1 443.8L833.7 445.4L833.4 446.7L833.5 447.9L833.1 449.3" fill="none" stroke="#898989" stroke-width="1.25" stroke-linejoin="round" stroke-linecap="round"/>
</svg>
</body>
</html>
